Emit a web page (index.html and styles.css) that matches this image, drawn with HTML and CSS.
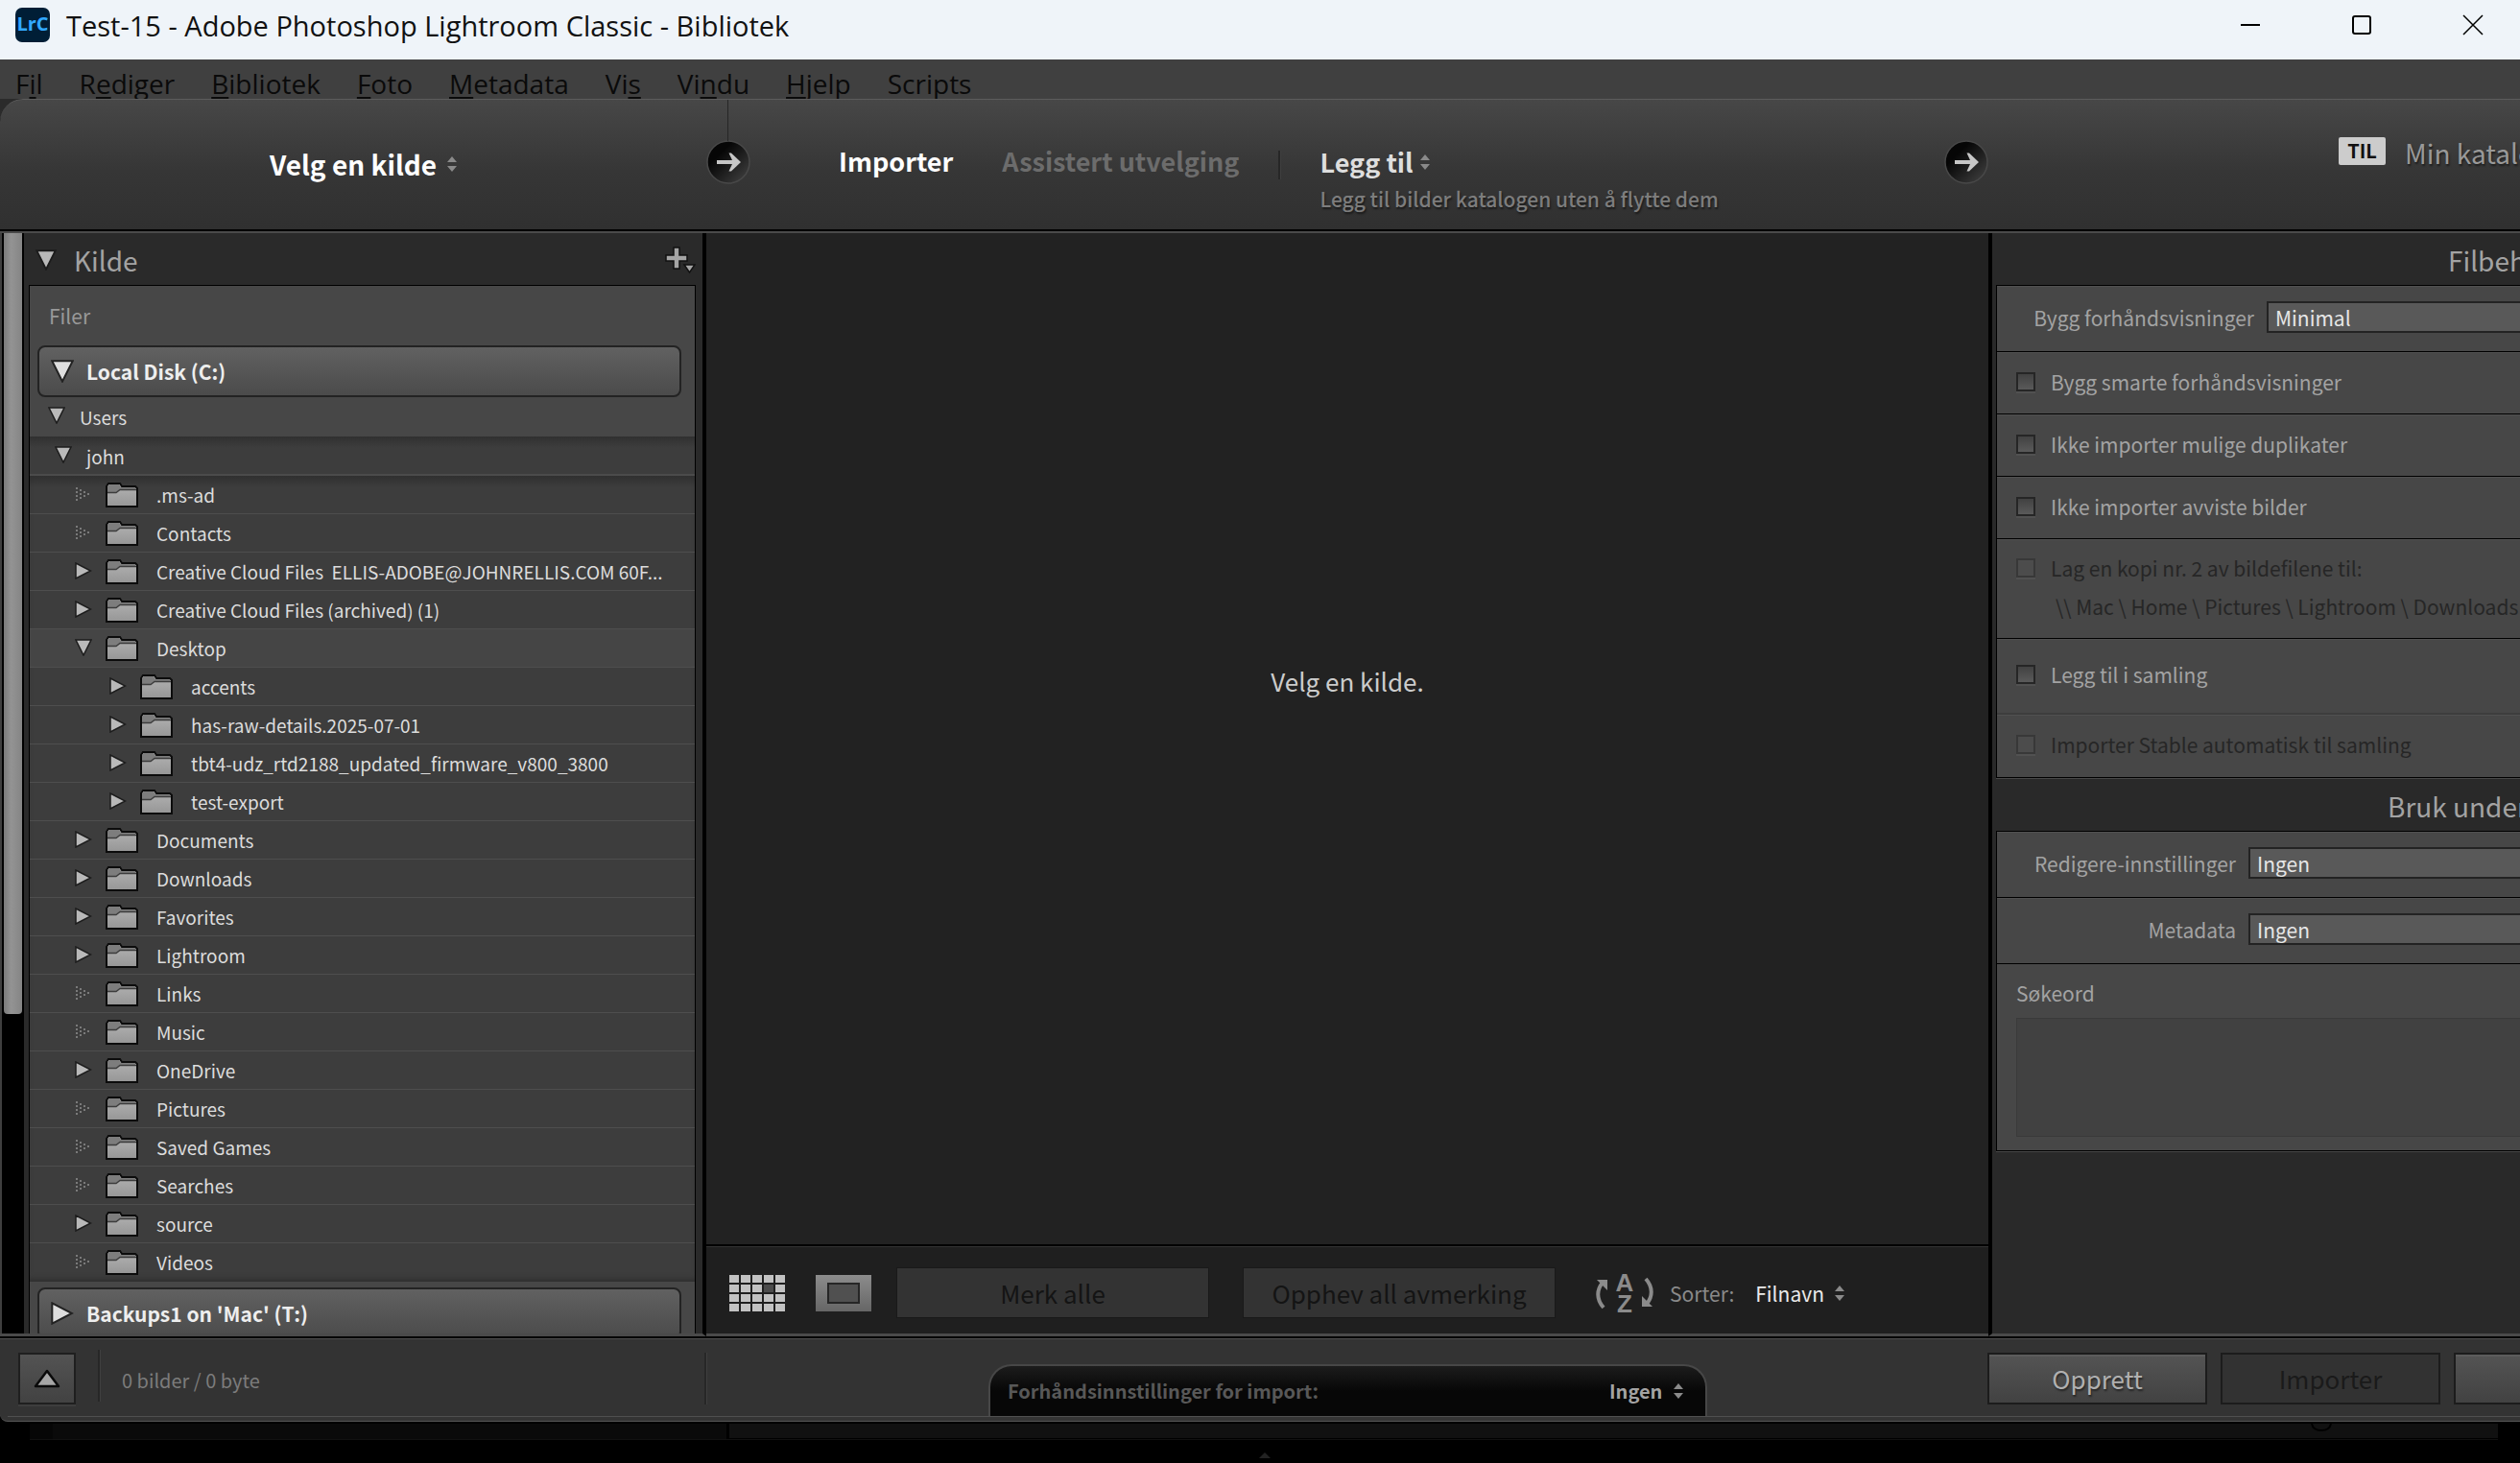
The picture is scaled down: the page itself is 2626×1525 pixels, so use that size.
FILE: index.html
```html
<!DOCTYPE html>
<html lang="nb">
<head>
<meta charset="utf-8">
<title>Test-15 - Adobe Photoshop Lightroom Classic - Bibliotek</title>
<link rel="stylesheet" href="styles.css">
</head>
<body>
<svg class="defs" aria-hidden="true">
  <defs>
    <linearGradient id="folder-fill" x1="0" y1="0" x2="0" y2="1"><stop offset="0" stop-color="#b4b4b4"/><stop offset="1" stop-color="#969696"/></linearGradient>
    <linearGradient id="knob-fill" x1="0" y1="0" x2="1" y2="1"><stop offset="0.3" stop-color="#060606"/><stop offset="1" stop-color="#454545"/></linearGradient>
    <linearGradient id="grey-fill" x1="0" y1="0" x2="0" y2="1"><stop offset="0" stop-color="#8c8c8c"/><stop offset="1" stop-color="#666"/></linearGradient>
    <symbol id="folder" viewBox="0 0 34 26">
      <path d="M1 25V4L3 1H15L17 4H31L33 6V25Z" fill="url(#folder-fill)" stroke="#0c0c0c" stroke-width="2"/>
      <path d="M2 10V4L4 2H14L16 5H31V7H15L11 10Z" fill="#7d7d7d"/>
      <path d="M2 10.500H11L15 7.500H32" fill="none" stroke="#3c3c3c" stroke-width="1.500"/>
    </symbol>
    <symbol id="closed" viewBox="0 0 18 18"><path d="M1 1V17L16.500 9Z" fill="#b9b9b9" stroke="#1c1c1c" stroke-width="1.500"/></symbol>
    <symbol id="open" viewBox="0 0 18 18"><path d="M1 1H17L9 17Z" fill="#b9b9b9" stroke="#1c1c1c" stroke-width="1.500"/></symbol>
    <symbol id="empty" viewBox="0 0 18 18"><path d="M1 3h2M1 7h2M1 11h2M1 15h2M5 5h2M5 9h2M5 13h2M9 7h2M9 11h2M13 9h2" stroke="#7a7a7a" stroke-width="2"/></symbol>
    <symbol id="updown" viewBox="0 0 12 18"><path d="M6 1L11 7H1ZM6 17L11 11H1Z" fill="currentColor"/></symbol>
    <symbol id="knob" viewBox="0 0 46 46">
      <circle cx="23" cy="23" r="22" fill="url(#knob-fill)" stroke="#484848" stroke-width="1.500"/>
      <path d="M11 21H27L23.500 13.500H26L36 23L26 32.500H23.500L27 25H11Z" fill="#c6c6c6"/>
    </symbol>
  </defs>
</svg>

<header class="titlebar">
  <span class="logo">LrC</span>
  <h1 class="title">Test-15 - Adobe Photoshop Lightroom Classic - Bibliotek</h1>
  <div class="window-controls">
    <button aria-label="Minimer"><svg width="22" height="22"><path d="M1 11H21" stroke="#000" stroke-width="2"/></svg></button>
    <button aria-label="Maksimer"><svg width="22" height="22"><rect x="2" y="2" width="18" height="18" rx="2" fill="none" stroke="#000" stroke-width="2"/></svg></button>
    <button aria-label="Lukk"><svg width="22" height="22"><path d="M1 1L21 21M21 1L1 21" stroke="#000" stroke-width="1.500"/></svg></button>
  </div>
</header>

<nav class="menubar">
  <button>F<u>i</u>l</button>
  <button>R<u>e</u>diger</button>
  <button><u>B</u>ibliotek</button>
  <button><u>F</u>oto</button>
  <button><u>M</u>etadata</button>
  <button>Vi<u>s</u></button>
  <button>Vi<u>n</u>du</button>
  <button><u>H</u>jelp</button>
  <button>Scripts</button>
</nav>

<section class="import-head">
  <div class="head-source">
    <button class="picker strong">Velg en kilde<svg class="updown"><use href="#updown"/></svg></button>
  </div>
  <div class="head-method">
    <svg class="knob first"><use href="#knob"/></svg>
    <button class="method active">Importer</button>
    <button class="method">Assistert utvelging</button>
    <span class="divider"></span>
    <div class="action">
      <button class="picker bright">Legg til<svg class="updown"><use href="#updown"/></svg></button>
      <p class="hint">Legg til bilder katalogen uten å flytte dem</p>
    </div>
    <svg class="knob last"><use href="#knob"/></svg>
  </div>
  <div class="head-target">
    <span class="badge">TIL</span>
    <span class="target">Min katalog</span>
  </div>
</section>

<main class="workspace">
  <aside class="source">
    <div class="scrollbar"><div class="thumb"></div></div>
    <div class="panel">
      <div class="panel-head">
        <svg class="tri"><use href="#open"/></svg>
        <h2>Kilde</h2>
        <button class="add" aria-label="Legg til kilde"><svg width="32" height="28" viewBox="0 0 32 28"><path d="M9 1h6v8h8v6h-8v8H9v-8H1V9h8z" fill="#a5a5a5" stroke="#111" stroke-width="1.500"/><path d="M20 19H31L25.500 27Z" fill="#a5a5a5" stroke="#111" stroke-width="1.500"/></svg></button>
      </div>
      <div class="panel-box">
        <p class="group">Filer</p>
        <button class="volume"><svg class="tri"><use href="#open"/></svg>Local Disk (C:)</button>
        <div class="parent users"><svg class="tri"><use href="#open"/></svg>Users</div>
        <div class="parent john"><svg class="tri"><use href="#open"/></svg>john</div>
        <ul class="tree">
          <li class="row"><svg class="tri"><use href="#empty"/></svg><svg class="folder"><use href="#folder"/></svg><span>.ms-ad</span></li>
          <li class="row"><svg class="tri"><use href="#empty"/></svg><svg class="folder"><use href="#folder"/></svg><span>Contacts</span></li>
          <li class="row"><svg class="tri"><use href="#closed"/></svg><svg class="folder"><use href="#folder"/></svg><span>Creative Cloud Files&nbsp; ELLIS-ADOBE@JOHNRELLIS.COM 60F...</span></li>
          <li class="row"><svg class="tri"><use href="#closed"/></svg><svg class="folder"><use href="#folder"/></svg><span>Creative Cloud Files (archived) (1)</span></li>
          <li class="row opened"><svg class="tri"><use href="#open"/></svg><svg class="folder"><use href="#folder"/></svg><span>Desktop</span></li>
          <li class="row nested"><svg class="tri"><use href="#closed"/></svg><svg class="folder"><use href="#folder"/></svg><span>accents</span></li>
          <li class="row nested"><svg class="tri"><use href="#closed"/></svg><svg class="folder"><use href="#folder"/></svg><span>has-raw-details.2025-07-01</span></li>
          <li class="row nested"><svg class="tri"><use href="#closed"/></svg><svg class="folder"><use href="#folder"/></svg><span>tbt4-udz_rtd2188_updated_firmware_v800_3800</span></li>
          <li class="row nested"><svg class="tri"><use href="#closed"/></svg><svg class="folder"><use href="#folder"/></svg><span>test-export</span></li>
          <li class="row"><svg class="tri"><use href="#closed"/></svg><svg class="folder"><use href="#folder"/></svg><span>Documents</span></li>
          <li class="row"><svg class="tri"><use href="#closed"/></svg><svg class="folder"><use href="#folder"/></svg><span>Downloads</span></li>
          <li class="row"><svg class="tri"><use href="#closed"/></svg><svg class="folder"><use href="#folder"/></svg><span>Favorites</span></li>
          <li class="row"><svg class="tri"><use href="#closed"/></svg><svg class="folder"><use href="#folder"/></svg><span>Lightroom</span></li>
          <li class="row"><svg class="tri"><use href="#empty"/></svg><svg class="folder"><use href="#folder"/></svg><span>Links</span></li>
          <li class="row"><svg class="tri"><use href="#empty"/></svg><svg class="folder"><use href="#folder"/></svg><span>Music</span></li>
          <li class="row"><svg class="tri"><use href="#closed"/></svg><svg class="folder"><use href="#folder"/></svg><span>OneDrive</span></li>
          <li class="row"><svg class="tri"><use href="#empty"/></svg><svg class="folder"><use href="#folder"/></svg><span>Pictures</span></li>
          <li class="row"><svg class="tri"><use href="#empty"/></svg><svg class="folder"><use href="#folder"/></svg><span>Saved Games</span></li>
          <li class="row"><svg class="tri"><use href="#empty"/></svg><svg class="folder"><use href="#folder"/></svg><span>Searches</span></li>
          <li class="row"><svg class="tri"><use href="#closed"/></svg><svg class="folder"><use href="#folder"/></svg><span>source</span></li>
          <li class="row"><svg class="tri"><use href="#empty"/></svg><svg class="folder"><use href="#folder"/></svg><span>Videos</span></li>
        </ul>
        <button class="volume second"><svg class="tri"><use href="#closed"/></svg>Backups1 on 'Mac' (T:)</button>
      </div>
    </div>
  </aside>

  <section class="preview">
    <p class="empty-note">Velg en kilde.</p>
    <div class="toolbar">
      <button class="view" aria-label="Rutenett">
        <svg width="58" height="38" viewBox="0 0 58 38">
          <path d="M0 4H58M0 14H58M0 24H58M0 34H58" stroke="#c2c2c2" stroke-width="8" stroke-dasharray="10 2"/>
          <rect x="36" y="10" width="10" height="8" fill="#4c4c4c"/>
        </svg>
      </button>
      <button class="view" aria-label="Lupe">
        <svg width="58" height="38"><rect width="58" height="38" fill="url(#grey-fill)"/><rect x="13" y="9" width="32" height="20" fill="#505050" stroke="#262626" stroke-width="2"/></svg>
      </button>
      <button class="mark" disabled>Merk alle</button>
      <button class="mark unmark" disabled>Opphev all avmerking</button>
      <span class="sort-icon" aria-hidden="true">
        <svg width="14" height="34" viewBox="0 0 14 34"><path d="M9 32C1 23 2 13 8 6" fill="none" stroke="#8b8b8b" stroke-width="4"/><path d="M2 3H13V14Z" fill="#8b8b8b"/></svg>
        <span class="az"><span>A</span><span>Z</span></span>
        <svg width="14" height="34" viewBox="0 0 14 34"><path d="M5 2C13 11 12 21 6 28" fill="none" stroke="#8b8b8b" stroke-width="4"/><path d="M12 31H1V20Z" fill="#8b8b8b"/></svg>
      </span>
      <label for="sort">Sorter:</label>
      <span class="picker sort"><select id="sort"><option>Filnavn</option></select><svg class="updown"><use href="#updown"/></svg></span>
    </div>
  </section>

  <aside class="settings">
    <h2 class="files">Filbehandling</h2>
    <div class="box">
      <div class="line tall"><label class="lead" for="previews">Bygg forhåndsvisninger</label><select id="previews" class="wide"><option>Minimal</option></select></div>
      <label class="line"><input type="checkbox">Bygg smarte forhåndsvisninger</label>
      <label class="line"><input type="checkbox">Ikke importer mulige duplikater</label>
      <label class="line"><input type="checkbox">Ikke importer avviste bilder</label>
      <div class="line copy">
        <label class="off"><input type="checkbox" disabled>Lag en kopi nr. 2 av bildefilene til:</label>
        <p class="path">\\ Mac \ Home \ Pictures \ Lightroom \ Downloads</p>
      </div>
      <label class="line collection"><input type="checkbox">Legg til i samling</label>
      <label class="line off auto"><input type="checkbox" disabled>Importer Stable automatisk til samling</label>
    </div>
    <h2 class="apply">Bruk under import</h2>
    <div class="box">
      <div class="line tall"><label class="lead edit" for="develop">Redigere-innstillinger</label><select id="develop" class="wide"><option>Ingen</option></select></div>
      <div class="line tall"><label class="lead edit" for="metadata">Metadata</label><select id="metadata" class="wide"><option>Ingen</option></select></div>
      <div class="keywords"><label for="keywords">Søkeord</label><textarea id="keywords"></textarea></div>
    </div>
  </aside>
</main>

<footer class="footer">
  <div class="foot-left">
    <button class="expand" aria-label="Vis mindre"><svg width="28" height="20" viewBox="0 0 28 20"><path d="M14 2L26 18H2Z" fill="#a6a6a6" stroke="#0a0a0a" stroke-width="2.500" stroke-linejoin="round"/></svg></button>
    <span class="divider"></span>
    <span class="count">0 bilder / 0 byte</span>
  </div>
  <span class="divider low"></span>
  <div class="preset">
    <label for="preset">Forhåndsinnstillinger for import:</label>
    <span class="picker"><select id="preset"><option>Ingen</option></select><svg class="updown"><use href="#updown"/></svg></span>
  </div>
  <div class="foot-actions">
    <button class="act">Opprett</button>
    <button class="act" disabled>Importer</button>
    <button class="act" aria-label="Avbryt"></button>
  </div>
</footer>
<div class="behind">
  <div class="strip"><span class="strip-left"></span><span class="strip-right"><svg width="24" height="8"><path d="M2 0C3 5 7 7 12 7S21 5 22 0" fill="none" stroke="#000" stroke-width="2"/></svg></span></div>
  <svg class="grip" width="14" height="8"><path d="M7 1L13 7H1Z" fill="#222"/></svg>
</div>
</body>
</html>
```
FILE: styles.css
```css
* { box-sizing: border-box; }

body {
  margin: 0;
  height: 100vh;
  display: flex;
  flex-direction: column;
  overflow: hidden;
  background: #000;
  color: #a3a3a3;
  font: 21px/28px "Noto Sans CJK SC", "Noto Sans", sans-serif;
}

h1, h2, p, ul { margin: 0; padding: 0; font-weight: 400; }
ul { list-style: none; }
svg { display: block; flex: none; }
.defs { position: absolute; width: 0; height: 0; }

button, select, textarea {
  margin: 0;
  padding: 0;
  border: 0;
  background: none;
  color: inherit;
  font: inherit;
  appearance: none;
}

.tri { width: 18px; height: 18px; }
.updown { width: 12px; height: 18px; color: #8a8a8a; }
.knob { width: 46px; height: 46px; }

/* Title bar and menus */
.titlebar {
  flex: none;
  height: 62px;
  padding: 0 17px 10px 16px;
  display: flex;
  align-items: center;
  background: #eff4f9;
  color: #111;
  font-family: "Open Sans", "Noto Sans", sans-serif;
}
.logo {
  width: 36px;
  height: 36px;
  border-radius: 7px;
  background: #001e36;
  color: #31a8ff;
  font-size: 20px;
  font-weight: 700;
  line-height: 34px;
  text-align: center;
}
.title { margin-left: 17px; padding-top: 2px; font-size: 29px; line-height: 40px; }
.window-controls { margin-left: auto; display: flex; }
.window-controls button { width: 64px; height: 52px; margin-left: 52px; display: grid; place-items: center; }

.menubar {
  flex: none;
  height: 41px;
  padding-left: 16px;
  display: flex;
  gap: 38px;
  background: #404040;
  color: #0a0a0a;
  font: 28px/50px "Open Sans", "Noto Sans", sans-serif;
}
.menubar u { text-decoration-thickness: 2px; text-underline-offset: 3px; }

/* Import header */
.import-head {
  flex: none;
  height: 136px;
  display: flex;
  border-top: 1px solid #5c5c5c;
  border-top-left-radius: 24px;
  background: linear-gradient(#474747, #363636 55%, #303030);
  box-shadow: -24px 0 0 #2b2b2b;
  font-size: 27px;
  text-shadow: 1px 2px 2px rgba(0, 0, 0, .5);
}
.picker { display: inline-flex; align-items: center; gap: 10px; }
.head-source { width: 736px; padding: 42px 0 0 22px; text-align: center; }
.strong { color: #fff; font-size: 28px; font-weight: 700; line-height: 50px; }
.head-method { position: relative; flex: 1; display: flex; align-items: flex-start; padding-top: 42px; }
.head-method::before { content: ""; position: absolute; left: 22px; top: 0; width: 1px; height: 43px; background: #262626; }
.head-method .method { line-height: 44px; margin-left: 51px; font-weight: 700; color: #6c6c6c; white-space: nowrap; }
.head-method .active { color: #fff; margin-left: 92px; }
.divider { width: 3px; height: 54px; background: #272727; border-right: 1px solid #3f3f3f; }
.head-method .divider { height: 30px; margin: 11px 41px 0 40px; }
.action .picker { color: #dedede; font-weight: 700; line-height: 46px; gap: 6px; }
.hint { color: #7d7d7d; font-size: 21px; line-height: 30px; font-weight: 500; white-space: nowrap; }
.last { margin-left: auto; }
.head-target { width: 554px; padding: 39px 0 0 365px; display: flex; align-items: flex-start; gap: 20px; overflow: hidden; }
.badge {
  flex: none;
  width: 49px;
  height: 29px;
  border-radius: 2px;
  background: #ccc;
  color: #111;
  font-size: 20px;
  font-weight: 700;
  line-height: 28px;
  text-align: center;
  text-shadow: none;
}
.target { font-size: 28px; line-height: 32px; white-space: nowrap; color: #999; }

/* Workspace */
.workspace {
  flex: 1;
  min-height: 0;
  display: flex;
  border-top: 2px solid #000;
  border-bottom: 2px solid #000;
  background: #222;
  box-shadow: inset 0 2px #4a4a4a;
  padding-top: 2px;
}
.source { width: 736px; display: flex; border-right: 4px solid #000; overflow: hidden; border-bottom: 3px solid #4a4a4a; }
.scrollbar { width: 25px; padding: 0 2px 0 2px; border-left: 2px solid #3f3f3f; background: #000; }
.thumb { height: 71%; border-radius: 0 0 4px 4px; background: linear-gradient(90deg, #7a7a7a, #939393 40%, #858585); }
.panel { flex: 1; min-width: 0; padding: 0 7px 0 5px; background: #2a2a2a; }
.panel-head { height: 54px; padding: 2px 0 0 7px; display: flex; align-items: center; }
.panel-head .tri { width: 22px; height: 22px; }
.panel-head h2 { margin-left: 18px; font-size: 28px; line-height: 40px; }
.add { margin-left: auto; }
.panel-box { border: 1px solid #000; background: #474747; color: #dcdcdc; font-size: 19px; }
.group { padding: 17px 0 0 20px; height: 62px; font-size: 21px; color: #999; }
.volume {
  width: calc(100% - 22px);
  height: 54px;
  margin-left: 8px;
  padding-left: 12px;
  display: flex;
  align-items: center;
  gap: 13px;
  border: 2px solid #232323;
  border-radius: 8px;
  background: linear-gradient(#616161, #4b4b4b);
  color: #eee;
  font-weight: 700;
  font-size: 21px;
}
.volume .tri { width: 24px; height: 24px; filter: brightness(1.2); }
.second { margin-top: 6px; }
.parent { display: flex; align-items: center; gap: 15px; height: 41px; }
.parent .tri { margin-bottom: 4px; }
.users { padding-left: 19px; }
.john { padding: 2px 0 0 26px; background: linear-gradient(#303030, #3d3d3d 30%); border-bottom: 2px solid #4b4b4b; }
.tree { background: linear-gradient(#303030, #3d3d3d 12px); box-shadow: inset 0 -6px 6px -4px #2c2c2c; }
.row { height: 40px; padding-left: 47px; display: flex; align-items: center; border-bottom: 1px solid #4e4e4e; white-space: nowrap; }
.row:last-child { border-color: transparent; }
.folder { width: 34px; height: 26px; margin: 0 19px 0 14px; }
.row .tri { margin-bottom: 2px; }
.nested { padding-left: 83px; }
.opened { background: #454545; }

.preview { flex: 1; min-width: 0; display: flex; flex-direction: column; border-bottom: 3px solid #4a4a4a; }
.empty-note { flex: 1; display: grid; place-content: center; padding-bottom: 120px; font-size: 26px; color: #ccc; }
.toolbar {
  height: 93px;
  padding: 6px 0 0 24px;
  display: flex;
  align-items: center;
  border-top: 2px solid #000;
  background: #1f1f1f;
  box-shadow: inset 0 1px #333;
  white-space: nowrap;
}
.view { margin-right: 32px; }
.mark { width: 326px; height: 53px; margin-left: -6px; border: 1px solid #191919; background: #333; color: #141414; font-size: 26px; }
.unmark { margin-left: 35px; }
.sort-icon { display: flex; align-items: center; margin: 0 16px 0 41px; gap: 7px; }
.az { width: 20px; display: flex; flex-direction: column; color: #8b8b8b; font: 700 26px/22px "Liberation Sans", Arial, sans-serif; text-align: center; }
.toolbar label { color: #8a8a8a; }
.sort { margin-left: 22px; color: #eaeaea; }

/* Settings column */
.settings { width: 554px; padding-left: 4px; border-left: 4px solid #000; overflow: hidden; background: #292929; border-bottom: 3px solid #4a4a4a; }
.settings h2 { height: 54px; font-size: 28px; line-height: 57px; white-space: nowrap; }
.files { padding-left: 471px; }
.apply { padding-left: 408px; }
.box { border: 1px solid #000; border-right: 0; background: #474747; box-shadow: 0 1px #484848; margin-bottom: 1px; }
.line { height: 65px; padding: 0 0 3px 20px; display: flex; align-items: center; border-bottom: 1px solid #000; white-space: nowrap; box-shadow: inset 0 1px #505050; }
.tall { height: 69px; }
.lead { flex: none; width: 248px; text-align: right; }
.edit { width: 229px; }
.wide { flex: 1; margin-left: 13px; height: 33px; padding: 0 0 0 7px; border: 2px solid #232323; border-right: 0; background: #595959; color: #e6e6e6; line-height: 28px; }
input[type="checkbox"] {
  appearance: none;
  width: 20px;
  height: 20px;
  margin: 0 16px 0 0;
  border: 2px solid #262626;
  background: linear-gradient(#424242, #5a5a5a);
  box-shadow: 0 2px #515151;
}
.off { color: #262626; }
.off input { border-color: #383838; background: #4c4c4c; }
.copy { height: 104px; flex-direction: column; align-items: flex-start; justify-content: center; gap: 12px; }
.copy label { display: flex; align-items: center; }
.path { padding-left: 41px; color: #262626; }
.collection { height: 79px; border-bottom: 2px solid #3d3d3d; }
.auto { border: 0; }
.keywords { height: 194px; padding: 16px 0 14px 20px; display: flex; flex-direction: column; gap: 12px; }
.keywords textarea { flex: 1; resize: none; border: 1px solid #3a3a3a; border-right: 0; background: #414141; }

/* Footer */
.footer {
  flex: none;
  height: 87px;
  display: flex;
  align-items: flex-start;
  border-top: 1px solid #4f4f4f;
  border-bottom: 1px solid #555;
  border-bottom-left-radius: 8px;
  background: linear-gradient(#333, #333) no-repeat 0 0 / 100% 80px, linear-gradient(#4f4f4f, #4f4f4f) no-repeat 8px 80px / 100% 1px, #343434;
}
.foot-left { width: 734px; padding: 0 0 0 19px; display: flex; align-items: center; }
.foot-left .divider { margin: 8px 22px 0 23px; }
.expand { width: 60px; height: 54px; margin-top: 14px; display: grid; place-items: center; border: 2px solid #1f1f1f; background: linear-gradient(#535353, #424242); box-shadow: 0 2px #3d3d3d; }
.count { padding-top: 18px; font-size: 20px; color: #7c7c7c; }
.low { margin-top: 14px; }
.preset {
  width: 749px;
  height: 54px;
  margin: 26px 0 0 293px;
  padding: 0 22px 0 18px;
  display: flex;
  align-items: center;
  justify-content: space-between;
  border: 2px solid #474747;
  border-bottom: 0;
  border-radius: 24px 24px 0 0;
  background: linear-gradient(#1c1c1c, #070707 50%);
  color: #585858;
  font-size: 20px;
  font-weight: 700;
}
.preset .picker { color: #a3a3a3; }
.foot-actions { width: 555px; margin: 14px 0 0 auto; display: flex; gap: 14px; overflow: hidden; }
.act { flex: none; width: 229px; height: 54px; border: 2px solid #1c1c1c; background: linear-gradient(#545454, #424242); color: #b0b0b0; font-size: 26px; line-height: 40px; text-shadow: 1px 2px 2px rgba(0, 0, 0, .5); box-shadow: inset 0 2px #5c5c5c; }
.act:disabled { background: #323232; color: #1a1a1a; box-shadow: none; text-shadow: none; }

.behind { flex: none; height: 43px; padding: 2px 23px 0 31px; }
.strip { height: 17px; display: flex; gap: 3px; border-bottom: 1px solid #111; }
.strip-left { width: 726px; background: #0a0a0a; border-left: 24px solid #060606; }
.strip-right { flex: 1; margin-bottom: 1px; padding-right: 172px; display: flex; justify-content: flex-end; background: #111; }
.grip { margin: 12px auto 0 1280px; }
```
